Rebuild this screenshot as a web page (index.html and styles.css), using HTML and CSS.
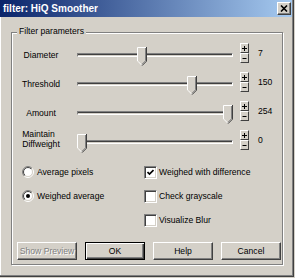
FILE: index.html
```html
<!DOCTYPE html>
<html>
<head>
<meta charset="utf-8">
<link rel="stylesheet" href="styles.css">
</head>
<body>
<div class="window">
  <div class="titlebar">
    <span class="title">filter: HiQ Smoother</span>
    <span class="close"><svg width="8" height="7" viewBox="0 0 8 7"><path d="M1 0.5 L7 6.5 M7 0.5 L1 6.5" stroke="#000" stroke-width="1.6"/></svg></span>
  </div>
  <div class="group">
    <span class="legend">Filter parameters</span>
    <div class="sliders">
      <div class="slider-row">
        <span class="label">Diameter</span>
        <div class="slider"><div class="track"></div><svg class="thumb" style="left:66px" width="10" height="19" viewBox="0 0 10 19"><polygon points="0,0 10,0 10,14 5,19 0,14" fill="#d4d0c8"/><polyline points="0.5,14 0.5,0.5 9.5,0.5" fill="none" stroke="#fff"/><polyline points="0.8,14.2 5,18.4" fill="none" stroke="#fff"/><polyline points="9.5,0 9.5,14.2 5,18.7" fill="none" stroke="#404040"/><polyline points="8.5,1 8.5,13.8 5,17.3" fill="none" stroke="#808080"/></svg></div>
        <div class="spin"><span class="spin-btn"><svg width="5" height="5" viewBox="0 0 5 5"><path d="M0 2.5H5M2.5 0V5" stroke="#000"/></svg></span><span class="spin-btn"><svg width="5" height="5" viewBox="0 0 5 5"><path d="M0.5 2.5H4.5" stroke="#000"/></svg></span></div>
        <span class="value">7</span>
      </div>
      <div class="slider-row">
        <span class="label">Threshold</span>
        <div class="slider"><div class="track"></div><svg class="thumb" style="left:116px" width="10" height="19" viewBox="0 0 10 19"><polygon points="0,0 10,0 10,14 5,19 0,14" fill="#d4d0c8"/><polyline points="0.5,14 0.5,0.5 9.5,0.5" fill="none" stroke="#fff"/><polyline points="0.8,14.2 5,18.4" fill="none" stroke="#fff"/><polyline points="9.5,0 9.5,14.2 5,18.7" fill="none" stroke="#404040"/><polyline points="8.5,1 8.5,13.8 5,17.3" fill="none" stroke="#808080"/></svg></div>
        <div class="spin"><span class="spin-btn"><svg width="5" height="5" viewBox="0 0 5 5"><path d="M0 2.5H5M2.5 0V5" stroke="#000"/></svg></span><span class="spin-btn"><svg width="5" height="5" viewBox="0 0 5 5"><path d="M0.5 2.5H4.5" stroke="#000"/></svg></span></div>
        <span class="value">150</span>
      </div>
      <div class="slider-row">
        <span class="label">Amount</span>
        <div class="slider"><div class="track"></div><svg class="thumb" style="left:152px" width="10" height="19" viewBox="0 0 10 19"><polygon points="0,0 10,0 10,14 5,19 0,14" fill="#d4d0c8"/><polyline points="0.5,14 0.5,0.5 9.5,0.5" fill="none" stroke="#fff"/><polyline points="0.8,14.2 5,18.4" fill="none" stroke="#fff"/><polyline points="9.5,0 9.5,14.2 5,18.7" fill="none" stroke="#404040"/><polyline points="8.5,1 8.5,13.8 5,17.3" fill="none" stroke="#808080"/></svg></div>
        <div class="spin"><span class="spin-btn"><svg width="5" height="5" viewBox="0 0 5 5"><path d="M0 2.5H5M2.5 0V5" stroke="#000"/></svg></span><span class="spin-btn"><svg width="5" height="5" viewBox="0 0 5 5"><path d="M0.5 2.5H4.5" stroke="#000"/></svg></span></div>
        <span class="value">254</span>
      </div>
      <div class="slider-row">
        <span class="label label-multi">Maintain<br>Diffweight</span>
        <div class="slider"><div class="track"></div><svg class="thumb" style="left:6px" width="10" height="19" viewBox="0 0 10 19"><polygon points="0,0 10,0 10,14 5,19 0,14" fill="#d4d0c8"/><polyline points="0.5,14 0.5,0.5 9.5,0.5" fill="none" stroke="#fff"/><polyline points="0.8,14.2 5,18.4" fill="none" stroke="#fff"/><polyline points="9.5,0 9.5,14.2 5,18.7" fill="none" stroke="#404040"/><polyline points="8.5,1 8.5,13.8 5,17.3" fill="none" stroke="#808080"/></svg></div>
        <div class="spin"><span class="spin-btn"><svg width="5" height="5" viewBox="0 0 5 5"><path d="M0 2.5H5M2.5 0V5" stroke="#000"/></svg></span><span class="spin-btn"><svg width="5" height="5" viewBox="0 0 5 5"><path d="M0.5 2.5H4.5" stroke="#000"/></svg></span></div>
        <span class="value">0</span>
      </div>
    </div>
    <div class="options">
      <div class="opt-col opt-left">
        <div class="opt">
          <svg class="radio" width="12" height="12" viewBox="0 0 12 12"><defs><linearGradient id="ro1" x1="0" y1="0" x2="1" y2="1"><stop offset="0.5" stop-color="#808080"/><stop offset="0.5" stop-color="#fff"/></linearGradient><linearGradient id="ri1" x1="0" y1="0" x2="1" y2="1"><stop offset="0.5" stop-color="#404040"/><stop offset="0.5" stop-color="#d4d0c8"/></linearGradient></defs><circle cx="6" cy="6" r="5.5" fill="none" stroke="url(#ro1)"/><circle cx="6" cy="6" r="4.5" fill="#fff" stroke="url(#ri1)"/></svg>
          <span>Average pixels</span>
        </div>
        <div class="opt">
          <svg class="radio" width="12" height="12" viewBox="0 0 12 12"><defs><linearGradient id="ro2" x1="0" y1="0" x2="1" y2="1"><stop offset="0.5" stop-color="#808080"/><stop offset="0.5" stop-color="#fff"/></linearGradient><linearGradient id="ri2" x1="0" y1="0" x2="1" y2="1"><stop offset="0.5" stop-color="#404040"/><stop offset="0.5" stop-color="#d4d0c8"/></linearGradient></defs><circle cx="6" cy="6" r="5.5" fill="none" stroke="url(#ro2)"/><circle cx="6" cy="6" r="4.5" fill="#fff" stroke="url(#ri2)"/><circle cx="6" cy="6" r="2" fill="#000"/></svg>
          <span>Weighed average</span>
        </div>
      </div>
      <div class="opt-col">
        <div class="opt opt-check">
          <span class="checkbox"><svg width="7" height="7" viewBox="0 0 7 7"><polyline points="0.5,3 2.5,5 6.5,1" fill="none" stroke="#000" stroke-width="1.7"/></svg></span>
          <span>Weighed with difference</span>
        </div>
        <div class="opt opt-check">
          <span class="checkbox"></span>
          <span>Check grayscale</span>
        </div>
        <div class="opt opt-check">
          <span class="checkbox"></span>
          <span>Visualize Blur</span>
        </div>
      </div>
    </div>
    <div class="buttons">
      <span class="btn btn-disabled">Show Preview</span>
      <span class="btn btn-default">OK</span>
      <span class="btn">Help</span>
      <span class="btn">Cancel</span>
    </div>
  </div>
</div>
</body>
</html>
```
FILE: styles.css
```css
* { box-sizing: border-box; }
html, body { margin: 0; padding: 0; }
body {
  width: 295px;
  height: 278px;
  overflow: hidden;
  background: #d4d0c8;
  font-family: "Liberation Sans", Arial, sans-serif;
  font-size: 8.6px;
  color: #000;
}
.window {
  width: 294px;
  height: 277px;
  border-right: 1px solid #404040;
  border-bottom: 1px solid #404040;
  box-shadow: inset -1px -1px 0 #808080, inset 1px 0 0 #fff;
  background: #d4d0c8;
}
.titlebar {
  width: 292px;
  height: 17px;
  background: linear-gradient(to right, #0a246a, #a6caf0);
  display: flex;
  align-items: center;
  justify-content: space-between;
  padding: 0 1px 0 3px;
}
.title {
  color: #fff;
  font-weight: bold;
  font-size: 10px;
  line-height: 1;
}
.close {
  width: 14px;
  height: 13px;
  background: #d4d0c8;
  border: 1px solid;
  border-color: #fff #404040 #404040 #fff;
  box-shadow: inset -1px -1px 0 #808080;
  display: flex;
  align-items: center;
  justify-content: center;
}
.close svg { display: block; margin-top: -1px; }
.group {
  position: relative;
  margin: 15px 0 0 11px;
  width: 272px;
  border: 1px solid #808080;
  box-shadow: 1px 1px 0 #fff, inset 1px 1px 0 #fff;
  padding: 7px 0 4px 0;
}
.legend {
  position: absolute;
  top: -7px;
  left: 5px;
  padding: 0 2px;
  line-height: 11px;
  background: #d4d0c8;
}
.slider-row {
  display: grid;
  grid-template-columns: 54px 166px 9px 1fr;
  column-gap: 3px;
  height: 29px;
  align-items: center;
  padding-left: 2px;
}
.label {
  text-align: center;
  line-height: 10px;
}
.label-multi {
  text-align: left;
  justify-self: center;
  padding-bottom: 5px;
}
.slider {
  position: relative;
  align-self: stretch;
  padding: 13px 4px 0 6px;
}
.track {
  height: 4px;
  border-top: 1px solid #808080;
  border-left: 1px solid #808080;
  border-bottom: 1px solid #fff;
  border-right: 1px solid #fff;
  background: #404040;
  box-shadow: inset 0 -1px 0 #d4d0c8;
}
.thumb {
  position: absolute;
  top: 7px;
  display: block;
}
.spin {
  display: flex;
  flex-direction: column;
  height: 20px;
  margin-bottom: 3px;
}
.spin-btn {
  width: 9px;
  height: 10px;
  background: #d4d0c8;
  border: 1px solid;
  border-color: #fff #404040 #404040 #fff;
  display: flex;
  align-items: center;
  justify-content: center;
}
.spin-btn svg { display: block; }
.value {
  padding-left: 6px;
  padding-bottom: 4px;
}
.options {
  display: flex;
  margin-top: 4px;
  padding-left: 10px;
}
.opt-col {
  display: flex;
  flex-direction: column;
}
.opt-left { width: 122px; }
.opt {
  height: 24px;
  display: flex;
  align-items: center;
  gap: 3px;
}
.opt-check { gap: 2px; }
.radio { display: block; flex: none; }
.checkbox {
  width: 13px;
  height: 13px;
  flex: none;
  background: #fff;
  border: 1px solid;
  border-color: #808080 #fff #fff #808080;
  box-shadow: inset 1px 1px 0 #404040, inset -1px -1px 0 #d4d0c8;
  display: flex;
  align-items: center;
  justify-content: center;
}
.checkbox svg { display: block; }
.buttons {
  display: flex;
  gap: 8px;
  padding-left: 5px;
  margin-top: 10px;
}
.btn {
  width: 60px;
  height: 18px;
  background: #d4d0c8;
  border: 1px solid;
  border-color: #fff #404040 #404040 #fff;
  box-shadow: inset -1px -1px 0 #808080;
  display: flex;
  align-items: center;
  justify-content: center;
}
.btn-default {
  border: 1px solid #000;
  box-shadow: inset 1px 1px 0 #fff, inset -1px -1px 0 #404040, inset -2px -2px 0 #808080;
}
.btn-disabled {
  color: #808080;
  text-shadow: 1px 1px 0 #fff;
}
```
